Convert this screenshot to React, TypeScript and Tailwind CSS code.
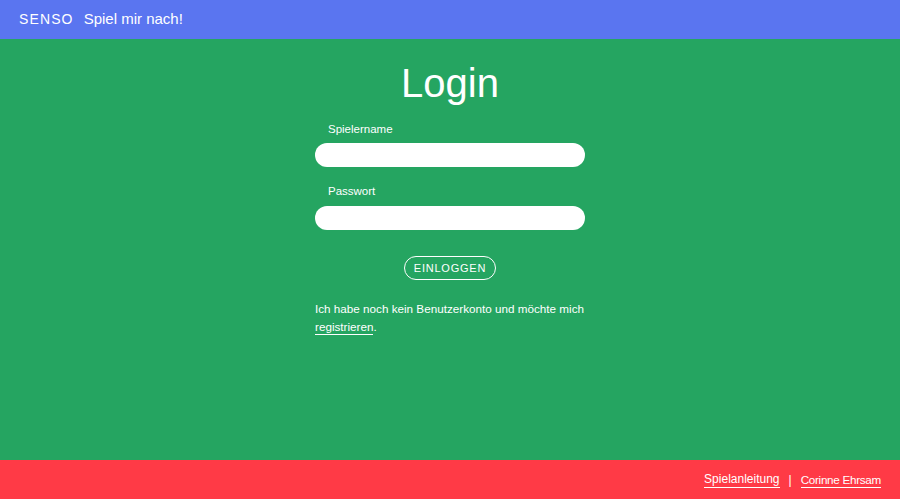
export default function App() {
  return (
    <div
      className="flex h-[499px] w-full flex-col bg-[#25a561] text-white"
      style={{ fontFamily: '"Liberation Sans", Arial, sans-serif' }}
    >
      {/* Header */}
      <header className="flex h-[39px] shrink-0 items-center bg-[#5a75f0] pl-[19px]">
        <span className="text-[14px] tracking-[0.08em]">SENSO</span>
        <span className="ml-[10px] text-[15px]">Spiel mir nach!</span>
      </header>

      {/* Main */}
      <main className="flex flex-1 justify-center">
        <div className="w-[270px] pt-[21px]">
          <h1 className="text-center text-[40px] leading-[46px]">Login</h1>

          <form className="mt-[16px]" onSubmit={(e) => e.preventDefault()}>
            <label className="block pl-[13px] text-[11.5px] leading-[14px]">Spielername</label>
            <input
              type="text"
              className="mt-[7px] block h-[24px] w-full rounded-full bg-white px-3 text-[13px] text-black outline-none"
            />
            <label className="mt-[17px] block pl-[13px] text-[11.5px] leading-[14px]">Passwort</label>
            <input
              type="password"
              className="mt-[8px] block h-[24px] w-full rounded-full bg-white px-3 text-[13px] text-black outline-none"
            />

            <div className="mt-[26px] flex justify-center">
              <button
                type="submit"
                className="h-[24px] w-[92px] rounded-full border-[1.5px] border-white text-[11px] tracking-[0.07em]"
              >
                EINLOGGEN
              </button>
            </div>
          </form>

          <p className="mt-[20px] text-[11.7px] leading-[18px]">
            Ich habe noch kein Benutzerkonto und möchte mich{" "}
            <a href="#" className="border-b-[1.5px] border-white pb-[1px]">
              registrieren
            </a>
            .
          </p>
        </div>
      </main>

      {/* Footer */}
      <footer className="flex h-[39px] shrink-0 items-center justify-end bg-[#ff3a46] pr-[19px] text-[12px]">
        <a href="#" className="border-b-[1.5px] border-white leading-[15px]">
          Spielanleitung
        </a>
        <span className="mx-[9px]">|</span>
        <a href="#" className="border-b-[1.5px] border-white text-[11.7px] leading-[15px] tracking-[-0.025em]">
          Corinne Ehrsam
        </a>
      </footer>
    </div>
  );
}
